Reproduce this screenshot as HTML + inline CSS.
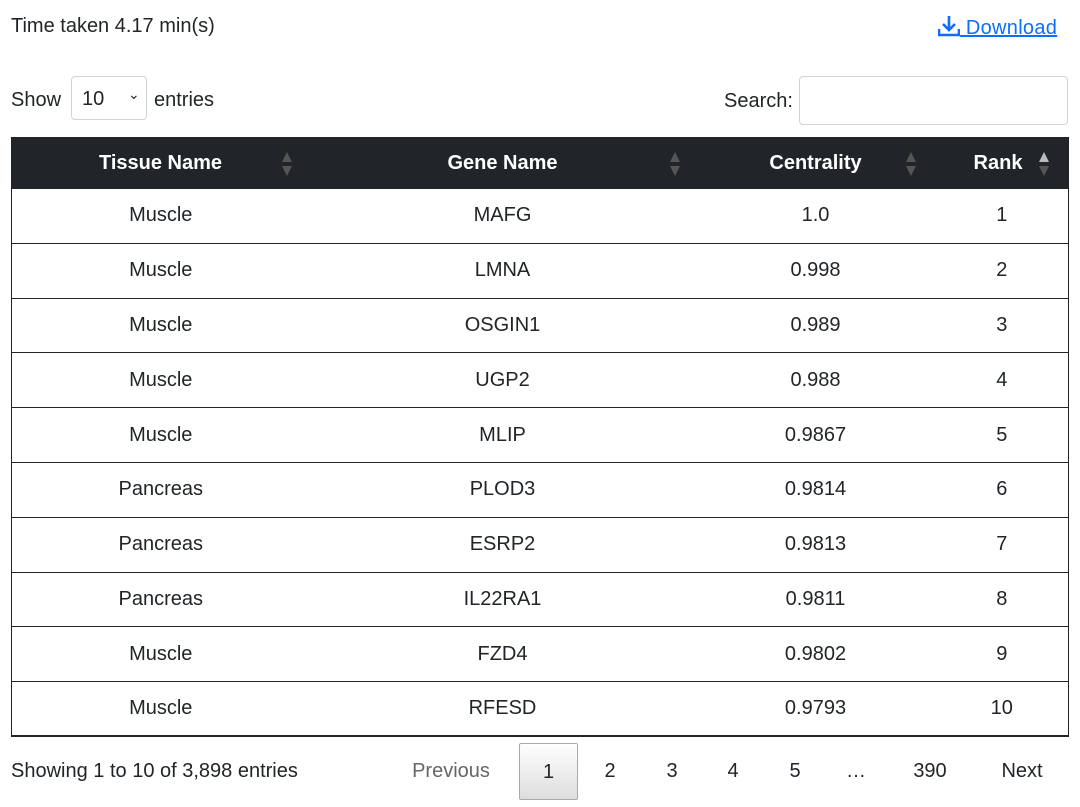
<!DOCTYPE html>
<html><head><style>
*{box-sizing:border-box}
body{margin:0;width:1080px;height:807px;background:#fff;font-family:"Liberation Sans",sans-serif;color:#212529;font-size:20px;position:relative;overflow:hidden}
.a{position:absolute;white-space:nowrap}
table{position:absolute;left:11px;top:137px;width:1057px;border-collapse:collapse;table-layout:fixed}
th{background:#212529;color:#fff;height:51px;font-weight:bold;position:relative;padding:0;border:1px solid #212529}
td{height:54.8px;text-align:center;padding:0;border-top:1px solid #212529;border-left:none;border-right:none}
tr td:first-child{border-left:1px solid #212529}
tr td:last-child{border-right:1px solid #212529}
tr:last-child td{border-bottom:2px solid #212529}
.s{position:absolute;top:13px;width:12px;height:26px}
.pg{position:absolute;top:743px;height:57px;line-height:56px;text-align:center;font-size:20px}
</style></head><body>
<div class="a" style="left:11px;top:15px">Time taken 4.17 min(s)</div>
<div class="a" style="left:938px;top:15px;color:#0d6efd;text-decoration:underline;letter-spacing:0.3px">
<svg width="22" height="22" viewBox="0 0 22 22" style="vertical-align:-3px"><path d="M11 1v13M5 9l6 6 6-6" stroke="#0d6efd" stroke-width="2.6" fill="none"/><path d="M1 14v6h20v-6" stroke="#0d6efd" stroke-width="2.6" fill="none"/></svg> Download</div>
<div class="a" style="left:11px;top:89px">Show</div>
<div class="a" style="left:71px;top:76px;width:76px;height:44px;border:1px solid #ced4da;border-radius:4px;padding:11px 0 0 10px">10<span style="position:absolute;left:56px;top:9px;font-size:14px">&#8964;</span></div>
<div class="a" style="left:154px;top:89px">entries</div>
<div class="a" style="left:724px;top:90px">Search:</div>
<div class="a" style="left:799px;top:76px;width:269px;height:49px;border:1px solid #ced4da;border-radius:4px"></div>
<table>
<colgroup><col style="width:298px"><col style="width:386px"><col style="width:240px"><col style="width:133px"></colgroup>
<tr><th>Tissue Name<svg class="s" style="left:269px" viewBox="0 0 12 26"><path d="M6 1L11 11H1zM6 25L11 15H1z" fill="#555"/></svg></th>
<th>Gene Name<svg class="s" style="left:659px;left:359px" viewBox="0 0 12 26"><path d="M6 1L11 11H1zM6 25L11 15H1z" fill="#555"/></svg></th>
<th>Centrality<svg class="s" style="left:209px" viewBox="0 0 12 26"><path d="M6 1L11 11H1zM6 25L11 15H1z" fill="#555"/></svg></th>
<th style="padding-right:8px">Rank<svg class="s" style="left:102px" viewBox="0 0 12 26"><path d="M6 1L11 11H1z" fill="#bbb"/><path d="M6 25L11 15H1z" fill="#555"/></svg></th></tr>
<tr><td>Muscle</td><td>MAFG</td><td>1.0</td><td>1</td></tr>
<tr><td>Muscle</td><td>LMNA</td><td>0.998</td><td>2</td></tr>
<tr><td>Muscle</td><td>OSGIN1</td><td>0.989</td><td>3</td></tr>
<tr><td>Muscle</td><td>UGP2</td><td>0.988</td><td>4</td></tr>
<tr><td>Muscle</td><td>MLIP</td><td>0.9867</td><td>5</td></tr>
<tr><td>Pancreas</td><td>PLOD3</td><td>0.9814</td><td>6</td></tr>
<tr><td>Pancreas</td><td>ESRP2</td><td>0.9813</td><td>7</td></tr>
<tr><td>Pancreas</td><td>IL22RA1</td><td>0.9811</td><td>8</td></tr>
<tr><td>Muscle</td><td>FZD4</td><td>0.9802</td><td>9</td></tr>
<tr><td>Muscle</td><td>RFESD</td><td>0.9793</td><td>10</td></tr>
</table>
<div class="a" style="left:11px;top:760px">Showing 1 to 10 of 3,898 entries</div>
<div class="pg" style="left:400px;width:102px;color:#666">Previous</div>
<div class="pg" style="left:519px;width:59px;border:1px solid #aaa;border-radius:2px;background:linear-gradient(#fff,#ddd)">1</div>
<div class="pg" style="left:590px;width:40px">2</div>
<div class="pg" style="left:652px;width:40px">3</div>
<div class="pg" style="left:713px;width:40px">4</div>
<div class="pg" style="left:775px;width:40px">5</div>
<div class="pg" style="left:836px;width:40px">…</div>
<div class="pg" style="left:905px;width:50px">390</div>
<div class="pg" style="left:990px;width:64px">Next</div>
</body></html>
